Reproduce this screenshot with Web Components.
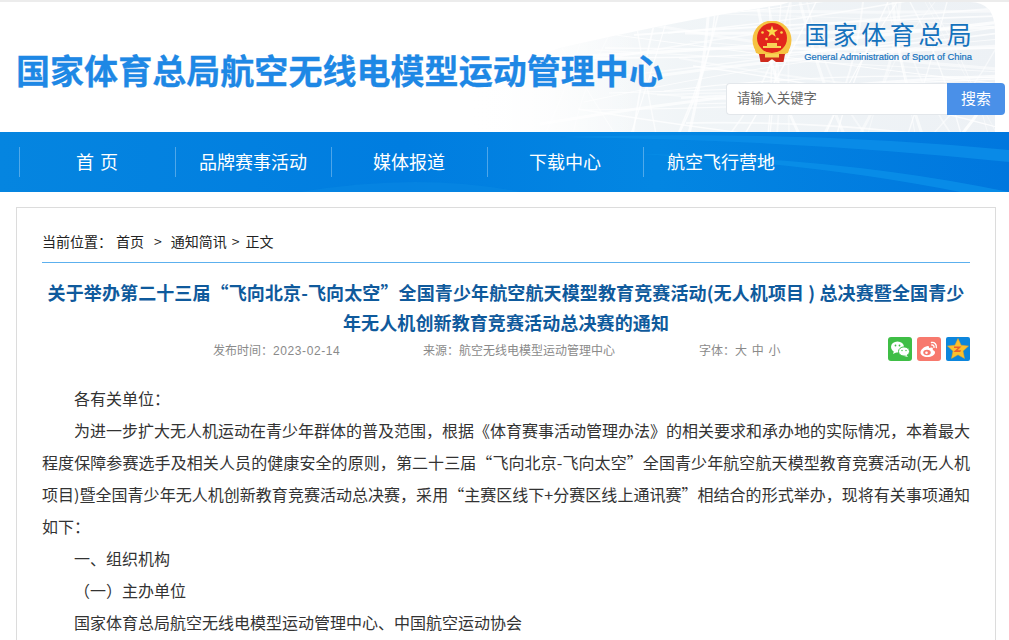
<!DOCTYPE html>
<html lang="zh">
<head>
<meta charset="utf-8">
<title>关于举办第二十三届“飞向北京-飞向太空”</title>
<style>
  html, body { margin: 0; padding: 0; background: #fff; }
  body { font-family: "Noto Sans CJK SC", "Liberation Sans", sans-serif; height: 640px; overflow: hidden; }
</style>
</head>
<body>
<site-header></site-header>
<site-nav>
  <a>首 页</a><a>品牌赛事活动</a><a>媒体报道</a><a>下载中心</a><a>航空飞行营地</a>
</site-nav>
<article-card>
  <bread-crumb slot="crumb"></bread-crumb>
  <span slot="title">关于举办第二十三届“飞向北京-飞向太空”全国青少年航空航天模型教育竞赛活动(无人机项目 ) 总决赛暨全国青少年无人机创新教育竞赛活动总决赛的通知</span>
  <article-meta slot="meta"></article-meta>
  <p>各有关单位：</p>
  <p>为进一步扩大无人机运动在青少年群体的普及范围，根据《体育赛事活动管理办法》的相关要求和承办地的实际情况，本着最大程度保障参赛选手及相关人员的健康安全的原则，第二十三届“飞向北京-飞向太空”全国青少年航空航天模型教育竞赛活动(无人机项目)暨全国青少年无人机创新教育竞赛活动总决赛，采用“主赛区线下+分赛区线上通讯赛”相结合的形式举办，现将有关事项通知如下：</p>
  <p>一、组织机构</p>
  <p>（一）主办单位</p>
  <p>国家体育总局航空无线电模型运动管理中心、中国航空运动协会</p>
</article-card>

<script>
function define(name, html) {
  customElements.define(name, class extends HTMLElement {
    constructor() {
      super();
      this.attachShadow({ mode: 'open' }).innerHTML = html;
    }
  });
}

// stadium lattice behind the header: fans of slightly bent white strands
function latticeLines() {
  let seed = 7;
  const rnd = () => (seed = (seed * 16807) % 2147483647) / 2147483647;
  let out = '';
  for (let i = 0; i < 64; i++) {
    let a, b;
    if (i % 2) {
      // steep strands
      const x = 520 + rnd() * 480;
      a = [x, 132];
      b = [x + (rnd() - .5) * 170, 0];
    } else {
      // shallow strands across the shape
      const y = rnd() * 132;
      a = [540 + rnd() * 160, y];
      b = [1000, y + (rnd() - .5) * 130];
    }
    const cx = (a[0] + b[0]) / 2 + (rnd() - .5) * 30;
    const cy = (a[1] + b[1]) / 2 + (rnd() - .5) * 30;
    const w = i % 5 == 0 ? 3 : 1 + rnd();
    out += `<path d="M${a[0].toFixed(0)} ${a[1].toFixed(0)}Q${cx.toFixed(0)} ${cy.toFixed(0)} ${b[0].toFixed(0)} ${b[1].toFixed(0)}" stroke-width="${w.toFixed(1)}" stroke-opacity="${(.4 + rnd() * .45).toFixed(2)}"/>`;
  }
  return out;
}

define('site-header', `
  <style>
    :host { display: block; height: 130px; border-top: 2px solid #ececec; position: relative; overflow: hidden; background: #fff; }
    .bg { position: absolute; left: 0; top: 0; width: 1009px; height: 130px; }
    .row { position: relative; display: flex; justify-content: space-between; height: 130px; padding: 0 4px 0 16px; }
    h1 { margin: 0; padding-top: 43px; font-size: 34px; line-height: 50px; font-weight: 700; letter-spacing: .05px; color: #1e88e5; white-space: nowrap; -webkit-text-stroke: .3px #1e88e5; }
    .side { display: flex; flex-direction: column; align-items: flex-end; }
    .logo { display: flex; align-items: flex-start; padding: 16px 33px 0 0; height: 65px; box-sizing: border-box; gap: 12px; }
    .logo svg { display: block; width: 40px; height: 42px; margin-top: 3px; }
    .cn { font-size: 25px; line-height: 30px; letter-spacing: 3.5px; margin-right: -3.5px; color: #1572bd; white-space: nowrap; }
    .en { font-family: "Liberation Sans", sans-serif; font-size: 9.4px; line-height: 12px; margin-top: 3px; color: #1572bd; white-space: nowrap; -webkit-text-stroke: .2px #1572bd; }
    .search { display: flex; width: 279px; height: 32px; margin-top: 16px; }
    .input { flex: 1; background: #fff; border: 1px solid #e3e7eb; border-right: 0; border-radius: 4px 0 0 4px; font-size: 13.3px; line-height: 28px; color: #666; padding-left: 10px; }
    .btn { width: 58px; background: #4a90e8; color: #fff; font-size: 15px; line-height: 30px; text-align: center; border-radius: 0 4px 4px 0; }
  </style>
  <svg class="bg" viewBox="0 0 1009 130" aria-hidden="true">
    <defs>
      <linearGradient id="fade" x1="0" x2="1" y1="0" y2="0">
        <stop offset="0" stop-color="#eef3f6" stop-opacity="0"/>
        <stop offset="0.4" stop-color="#eef3f6" stop-opacity=".85"/>
        <stop offset="1" stop-color="#edf1f5"/>
      </linearGradient>
      <linearGradient id="veil" x1="0" x2="1" y1="0" y2="0">
        <stop offset="0" stop-color="#fff"/>
        <stop offset="1" stop-color="#fff" stop-opacity="0"/>
      </linearGradient>
      <clipPath id="shape"><path d="M470 78 L560 46 Q680 18 780 3 L790 0 H970 Q995 0 995 30 V130 H470Z"/></clipPath>
    </defs>
    <g clip-path="url(#shape)">
      <rect x="470" width="530" height="130" fill="url(#fade)"/>
      <g stroke="#fff" fill="none">${latticeLines()}</g>
      <rect x="470" width="170" height="130" fill="url(#veil)"/>
    </g>
  </svg>
  <div class="row">
    <h1>国家体育总局航空无线电模型运动管理中心</h1>
    <div class="side">
      <div class="logo">
        <svg viewBox="0 0 40 42">
          <circle cx="20" cy="19" r="19.500" fill="#f6c242"/>
          <circle cx="20" cy="17" r="15" fill="#e2261c"/>
          <path d="M20 4.500l1.500 4.300h4.500l-3.600 2.700 1.300 4.300-3.700-2.600-3.700 2.600 1.300-4.300-3.600-2.700h4.500z" fill="#fbd84a"/>
          <g fill="#fbd84a"><circle cx="10.500" cy="11.500" r="1.300"/><circle cx="29.500" cy="11.500" r="1.300"/><circle cx="14.500" cy="18" r="1.300"/><circle cx="25.500" cy="18" r="1.300"/></g>
          <path d="M15 22h10v3H15zM11 25h18v2H11z" fill="#f8d257"/>
          <path d="M2 25q18 14 36 0l-2 7q-16 5-32 0z" fill="#f6c242"/>
          <path d="M7 33h26l-1.500 8h-7.500l-4-3-4 3H8.500z" fill="#cf2a1d"/>
          <path d="M13 33h14v3.500H13z" fill="#f8d257"/>
        </svg>
        <div>
          <div class="cn">国家体育总局</div>
          <div class="en">General Administration of Sport of China</div>
        </div>
      </div>
      <div class="search">
        <div class="input">请输入关键字</div>
        <div class="btn">搜索</div>
      </div>
    </div>
  </div>
`);

define('site-nav', `
  <style>
    :host { display: flex; position: relative; height: 60px; padding: 15px 0 15px 19px; box-sizing: border-box; background: #0382e0; overflow: hidden; }
    svg { position: absolute; left: 0; top: 0; width: 1009px; height: 60px; }
    ::slotted(a) { display: block; position: relative; width: 156px; height: 30px; line-height: 28px; padding-right: 1px; box-sizing: border-box; text-align: center; color: #fff; font-size: 18px; word-spacing: 2px; border-left: 1px solid rgba(255,255,255,.3); }
  </style>
  <svg viewBox="0 0 1009 60" aria-hidden="true">
    <defs>
      <linearGradient id="nav" x1="0" x2="1" y1="0" y2="0">
        <stop offset="0" stop-color="#0585e0"/>
        <stop offset=".4" stop-color="#007de0"/>
        <stop offset=".65" stop-color="#0386e2"/>
        <stop offset="1" stop-color="#0077de"/>
      </linearGradient>
    </defs>
    <rect width="1009" height="60" fill="url(#nav)"/>
    <path d="M560 5 Q800 -2 1009 18 V30 Q800 8 560 5Z" fill="#0b8ee8" opacity=".8"/>
    <path d="M640 22 Q840 25 1009 60 H960 Q820 32 640 22Z" fill="#0a90e8" opacity=".8"/>
    <path d="M300 60 Q420 40 520 60Z" fill="#0a8ae4" opacity=".5"/>
  </svg>
  <slot></slot>
`);

define('bread-crumb', `
  <style>
    :host { display: flex; height: 30px; font-size: 14px; line-height: 18px; color: #222; white-space: nowrap; }
    span { display: block; }
  </style>
  <span style="margin-right:4px">当前位置：</span><span style="margin-right:10px">首页</span><span style="margin-right:9px">&gt;</span><span style="margin-right:5px">通知简讯</span><span style="margin-right:6px">&gt;</span><span>正文</span>
`);

define('share-icons', `
  <style>
    :host { display: flex; gap: 5px; }
    svg { display: block; width: 24px; height: 24px; }
  </style>
  <svg viewBox="0 0 24 24"><rect width="24" height="24" rx="3" fill="#3fbe46"/>
    <ellipse cx="9.500" cy="10" rx="6.500" ry="5.500" fill="#fff"/><path d="M6 14l-1 3 4-2z" fill="#fff"/>
    <ellipse cx="16" cy="14.500" rx="5.500" ry="4.600" fill="#fff" stroke="#3fbe46"/><path d="M18.500 18l1.500 2-4-1z" fill="#fff"/>
    <g fill="#3fbe46"><circle cx="7.500" cy="8.500" r=".9"/><circle cx="11.500" cy="8.500" r=".9"/><circle cx="14" cy="13.500" r=".7"/><circle cx="18" cy="13.500" r=".7"/></g></svg>
  <svg viewBox="0 0 24 24"><rect width="24" height="24" rx="3" fill="#f7796d"/>
    <path d="M10.500 9C6.500 10 3.500 13 3.500 15.500c0 2.500 3 4.500 7 4.500s7.500-2.200 7.500-4.600c0-1.700-1.700-2-2.300-2.300.5-1.400.2-2.400-1-2.600-1-.1-2 .3-2.700.6.300-1.500-.3-2.300-1.500-1.900z" fill="#fff"/>
    <ellipse cx="10" cy="15.500" rx="3.700" ry="2.800" fill="#f7796d"/><circle cx="9.500" cy="15.700" r="1.300" fill="#fff"/>
    <path d="M14.500 5.500c3-.6 5.500 2 4.800 5M14.800 8c1.500-.2 2.500 1 2.200 2.400" fill="none" stroke="#fff" stroke-width="1.400" stroke-linecap="round"/></svg>
  <svg viewBox="0 0 24 24"><rect width="24" height="24" rx="2" fill="#0d86dc"/>
    <path d="M12 1.500l3.100 6.700 7.400.9-5.500 5 1.500 7.300-6.500-3.600-6.500 3.600 1.500-7.300-5.500-5 7.400-.9z" fill="#fbc02d" stroke="#f0a51e" stroke-width=".5"/>
    <path d="M8 9.500h7.500l-4 3.800h3.700l-1 1.700H7.500l4.300-4H8z" fill="#e8602f"/></svg>
`);

define('article-meta', `
  <style>
    :host { display: flex; height: 28px; font-size: 12px; line-height: 28px; color: #8a8a8a; white-space: nowrap; align-items: flex-start; }
    .date { width: 210px; margin-left: 171px; }
    .date b { font-family: "Liberation Sans", sans-serif; font-weight: 400; letter-spacing: .6px; }
    .src { width: 276px; }
    .font { flex: 1; word-spacing: 2px; }
    share-icons { margin-top: 1px; }
  </style>
  <div class="date">发布时间：<b>2023-02-14</b></div>
  <div class="src">来源：航空无线电模型运动管理中心</div>
  <div class="font">字体：大 中 小</div>
  <share-icons></share-icons>
`);

define('article-card', `
  <style>
    :host { display: block; margin: 15px 0 0 16px; width: 980px; height: 500px; box-sizing: border-box; border: 1px solid #dcdcdc; border-bottom: 0; padding: 24px 25px 0; }
    .crumb { display: block; border-bottom: 1px solid #5cb0ee; }
    h2 { margin: 14px 0 0; font-size: 18px; line-height: 30px; font-weight: 700; letter-spacing: .12px; color: #0f5a9c; text-align: center; }
    .meta { margin-top: -1px; }
    .body { margin-top: 18px; font-size: 16px; line-height: 32px; color: #333; }
    ::slotted(p) { margin: 0; text-indent: 32px; text-align: justify; }
  </style>
  <div class="crumb"><slot name="crumb"></slot></div>
  <h2><slot name="title"></slot></h2>
  <div class="meta"><slot name="meta"></slot></div>
  <div class="body"><slot></slot></div>
`);
</script>
</body>
</html>
